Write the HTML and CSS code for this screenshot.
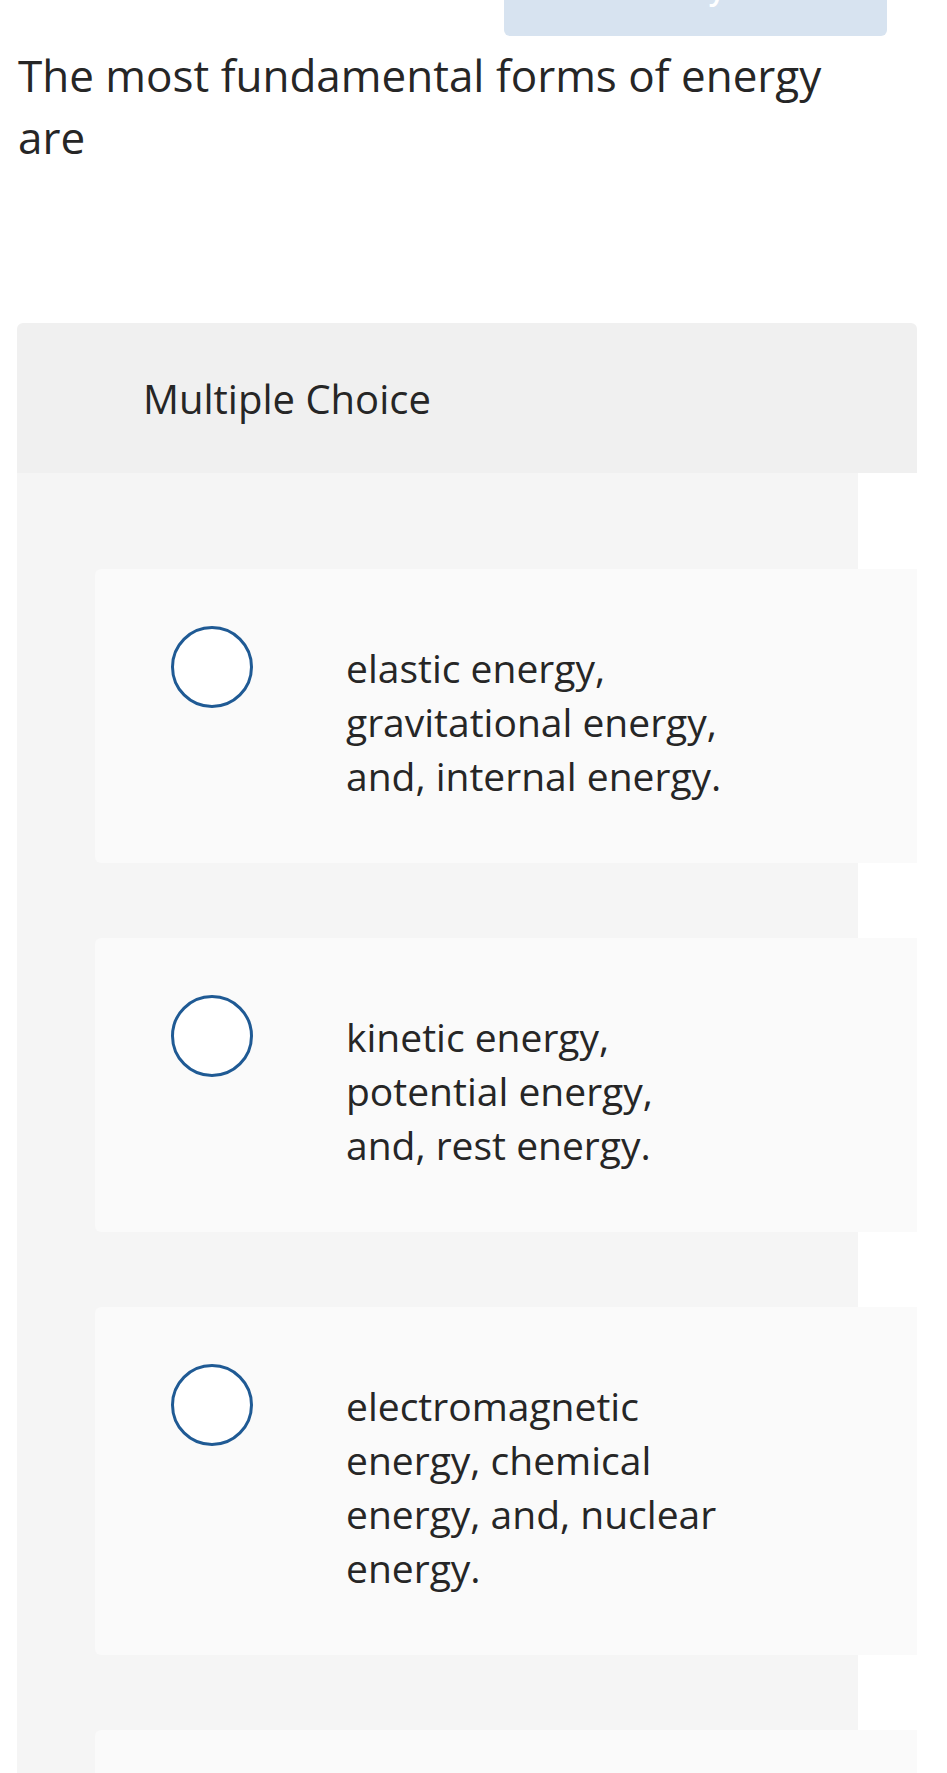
FILE: index.html
```html
<!DOCTYPE html>
<html lang="en">
<head>
  <meta charset="UTF-8">
  <meta name="viewport" content="width=device-width, initial-scale=1.0">
  <title>Multiple Choice</title>
  <link rel="stylesheet" href="styles.css">
</head>
<body>

<div class="top-bar">
  <button class="check-btn">Check my work</button>
</div>

<p class="prompt">The most fundamental forms of energy are</p>

<!-- question panel -->
<div class="question">
  <div class="question-type">Multiple Choice</div>
  <div class="choices">
    <label class="choice">
      <span class="radio"></span>
      <span class="choice-text">elastic energy, gravitational energy, and, internal energy.</span>
    </label>
    <label class="choice">
      <span class="radio"></span>
      <span class="choice-text">kinetic energy, potential energy, and, rest energy.</span>
    </label>
    <label class="choice">
      <span class="radio"></span>
      <span class="choice-text">electromagnetic energy, chemical energy, and, nuclear energy.</span>
    </label>
    <label class="choice">
      <span class="radio"></span>
      <span class="choice-text"></span>
    </label>
  </div>
</div>

</body>
</html>
```

FILE: styles.css
```css
body {
  margin: 0;
  padding: 0 30px 0 17px;
  font-family: "Open Sans", Lato, Arial, sans-serif;
  color: #262626;
  background: #fff;
  overflow: hidden;
}
.top-bar {
  display: flex;
  justify-content: flex-end;
}
.check-btn {
  width: 383px;
  height: 80px;
  margin: -44px 30px 0 0;
  padding: 0 0 16px;
  border: none;
  border-radius: 6px;
  background-color: #d7e3f0;
  color: #fff;
  font-family: inherit;
  font-size: 30px;
  font-weight: 600;
}
.prompt {
  max-width: 850px;
  margin: 8px 0 0 1px;
  font-size: 44px;
  line-height: 62px;
}
.question {
  margin-top: 155px;
  width: 900px;
  border-radius: 6px 6px 0 0;
  overflow: hidden;
}
.question-type {
  display: flex;
  align-items: center;
  height: 150px;
  padding-left: 126px;
  background-color: #f0f0f0;
  font-size: 40px;
}
.choices {
  width: 841px;
  padding: 96px 0 0 78px;
  box-sizing: border-box;
  background-color: #f5f5f5;
}
.choice {
  display: flex;
  width: 840px;
  margin-bottom: 75px;
  padding: 57px 0 60px 76px;
  box-sizing: border-box;
  background-color: #fafafa;
  border-radius: 6px;
  cursor: pointer;
}
.radio {
  flex: none;
  width: 82px;
  height: 82px;
  box-sizing: border-box;
  border: 3px solid #1f5a94;
  border-radius: 50%;
  background: #fff;
}
.choice-text {
  width: 380px;
  margin: 15px 0 0 93px;
  font-size: 39px;
  line-height: 54px;
}
```
